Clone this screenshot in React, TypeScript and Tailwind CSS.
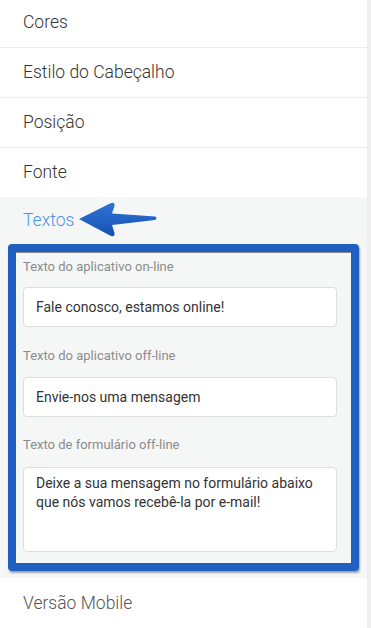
const menuTop = ["Estilo do Cabeçalho", "Posição"];

function MenuRow({ label, border = true, className = "" }: { label: string; border?: boolean; className?: string }) {
	return (
		<div
			className={`flex items-center pl-[23px] text-[17.5px] font-light text-[#333] ${
				border ? "border-b border-[#ececec]" : ""
			} ${className}`}
		>
			{label}
		</div>
	);
}

function Arrow() {
	return (
		<svg width="82" height="40" viewBox="0 0 82 40" className="ml-[3px] mt-[-2px]">
			<defs>
				<linearGradient id="arrowFill" x1="0" y1="0" x2="0" y2="1">
					<stop offset="0" stopColor="#2f74d6" />
					<stop offset="1" stopColor="#1650b2" />
				</linearGradient>
			</defs>
			<path
				d="M2 19 L33 3.5 Q38 1 37.5 6 L35 13.5 L78 16.5 Q81 18 78 20 L35 25 L37.5 33 Q38 38 33 35.5 Z"
				fill="url(#arrowFill)"
			/>
		</svg>
	);
}

export default function App() {
	return (
		<div className="flex h-[628px] w-[371px] overflow-hidden bg-white font-['Roboto',sans-serif]">
			<div className="flex w-[367px] flex-col">
				<MenuRow label="Cores" className="h-[48px] pb-[3px]" />
				{menuTop.map((item) => (
					<MenuRow key={item} label={item} className="h-[50px]" />
				))}
				<MenuRow label="Fonte" border={false} className="h-[49px]" />

				{/* Expanded section */}
				<div className="flex h-[381px] flex-col bg-[#f5f6f6]">
					<div className="flex h-[47px] items-center pl-[23px]">
						<span className="text-[17.5px] font-light text-[#4f93e6]">Textos</span>
						<Arrow />
					</div>
					<div className="mx-[8px] rounded-[4px] border-[8px] border-[#1f5fbf] shadow-[1px_2px_2px_rgba(0,0,0,0.35)]">
						<div className="flex flex-col pl-[7px] pr-[14px] pt-[5px] pb-[11px] shadow-[inset_0_1px_0_#8a8a8a]">
							<div className="mb-[10px] h-5 leading-5 text-[13px] text-[#8c8c8c]">
								Texto do aplicativo on-line
							</div>
							<div className="flex h-[40px] items-center rounded-[4px] border border-[#dedede] bg-white px-[12px] text-[14px] text-[#333]">
								Fale conosco, estamos online!
							</div>
							<div className="mt-[19px] mb-[11px] h-5 leading-5 text-[13px] text-[#8c8c8c]">
								Texto do aplicativo off-line
							</div>
							<div className="flex h-[40px] items-center rounded-[4px] border border-[#dedede] bg-white px-[12px] text-[14px] text-[#333]">
								Envie-nos uma mensagem
							</div>
							<div className="mt-[18px] mb-[12px] h-5 leading-5 text-[13px] text-[#8c8c8c]">
								Texto de formulário off-line
							</div>
							<div className="h-[85px] rounded-[4px] border border-[#dedede] bg-white px-[12px] pt-[6px] text-[14px] leading-[19px] text-[#333]">
								Deixe a sua mensagem no formulário abaixo que nós vamos recebê-la por e-mail!
							</div>
						</div>
					</div>
				</div>

				<MenuRow label="Versão Mobile" border={false} className="h-[50px] text-[#555]" />
			</div>
			<div className="w-[4px] bg-[#eeeeee]" />
		</div>
	);
}
